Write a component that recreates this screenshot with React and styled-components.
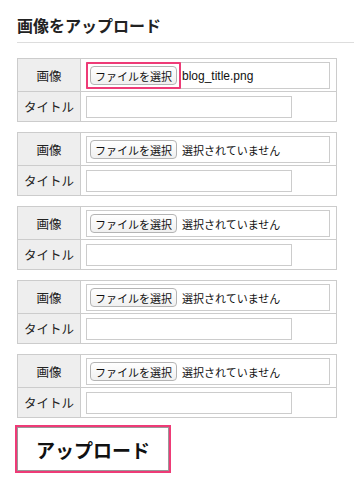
import React from 'react';
import styled, { createGlobalStyle } from 'styled-components';

const GlobalStyle = createGlobalStyle`
  body {
    margin: 0;
    background: #fff;
    color: #222;
    font-family: "Liberation Sans", "Noto Sans CJK JP", sans-serif;
  }
`;

const Page = styled.div`
  padding: 0 0 20px 17px;
  overflow: hidden;
`;

const Heading = styled.h2`
  margin: 0 0 15px;
  padding: 15px 0 7px;
  font-size: 16px;
  line-height: 20px;
  font-weight: bold;
  color: #222;
  border-bottom: 1px solid #ddd;
  font-family: "Noto Sans CJK JP", sans-serif;
`;

const FormTable = styled.div`
  width: 320px;
  box-sizing: border-box;
  display: grid;
  grid-template-columns: 63px 1fr;
  grid-template-rows: 33px 30px;
  border-top: 1px solid #ccc;
  border-left: 1px solid #ccc;
  margin-bottom: 10px;
`;

const LabelCell = styled.div`
  box-sizing: border-box;
  background: #eee;
  border-right: 1px solid #ccc;
  border-bottom: 1px solid #ccc;
  display: flex;
  align-items: center;
  justify-content: center;
  font-family: "Noto Sans CJK JP", sans-serif;
  font-size: 12.5px;
  color: #222;
`;

const ValueCell = styled.div`
  box-sizing: border-box;
  border-right: 1px solid #ccc;
  border-bottom: 1px solid #ccc;
  padding: ${p => (p.$file ? '3px 6px 2px 5px' : '4px 6px 3px 5px')};
  display: flex;
  align-items: flex-start;
`;

const FileBox = styled.div`
  box-sizing: border-box;
  width: 244px;
  height: 27px;
  border: 1px solid #ccc;
  padding: 0 3px;
  display: flex;
  align-items: center;
  gap: 5px;
`;

const FileButton = styled.span`
  position: relative;
  box-sizing: border-box;
  width: 87px;
  height: 19px;
  flex-shrink: 0;
  display: flex;
  align-items: center;
  justify-content: center;
  border: 1px solid #b4b4b4;
  border-radius: 4px;
  background: linear-gradient(#fff, #f0f0f0);
  font-family: "Noto Sans CJK JP", sans-serif;
  font-size: 11px;
  color: #111;

  &::after {
    content: '';
    display: ${p => (p.$marked ? 'block' : 'none')};
    position: absolute;
    inset: -5px;
    border: 2px solid #ee3b77;
    border-radius: 1px;
  }
`;

const FileStatus = styled.span`
  font-size: ${p => (p.$chosen ? '12px' : '11px')};
  color: #111;
  white-space: nowrap;
`;

const TextInput = styled.div`
  box-sizing: border-box;
  width: 206px;
  height: 22px;
  border: 1px solid #ccc;
  background: #fff;
`;

const UploadButton = styled.button`
  box-sizing: border-box;
  margin: -1px 0 0 0;
  width: 152px;
  height: 44px;
  background: #fff;
  border: 1px solid #999;
  outline: 2px solid #ee3b77;
  font-family: "Noto Sans CJK JP", sans-serif;
  font-size: 19px;
  font-weight: bold;
  color: #111;
  padding: 0;
`;

const rows = [
  { file: 'blog_title.png', marked: true },
  { file: null },
  { file: null },
  { file: null },
  { file: null },
];

export default function App() {
  return (
    <Page>
      <GlobalStyle />
      <Heading>画像をアップロード</Heading>
      {rows.map((row, i) => (
        <FormTable key={i}>
          <LabelCell>画像</LabelCell>
          <ValueCell $file>
            <FileBox>
              <FileButton $marked={row.marked}>ファイルを選択</FileButton>
              <FileStatus $chosen={!!row.file}>
                {row.file || '選択されていません'}
              </FileStatus>
            </FileBox>
          </ValueCell>
          <LabelCell>タイトル</LabelCell>
          <ValueCell>
            <TextInput />
          </ValueCell>
        </FormTable>
      ))}
      <UploadButton>アップロード</UploadButton>
    </Page>
  );
}
